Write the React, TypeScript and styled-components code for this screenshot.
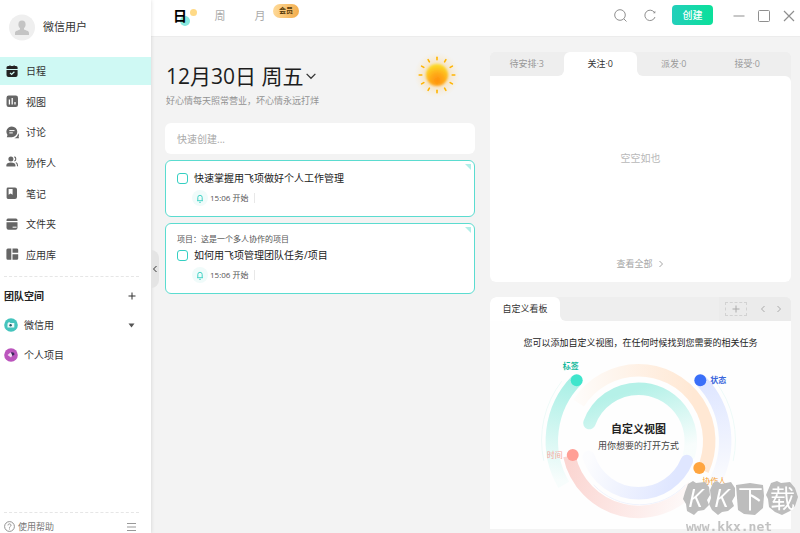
import React from "react";
import styled, { createGlobalStyle, css } from "styled-components";

const GlobalStyle = createGlobalStyle`
  *, *::before, *::after { box-sizing: border-box; }
  html, body { margin: 0; padding: 0; }
  body {
    font-family: "Open Sans", "Noto Sans CJK SC", sans-serif;
    font-size: 10px;
    line-height: 16px;
    color: #333;
    background: #f3f3f3;
  }
  button, input { font: inherit; color: inherit; }
  button { border: 0; padding: 0; background: none; cursor: pointer; }
  a { color: inherit; text-decoration: none; }
  h1, h2, p, ul { margin: 0; padding: 0; }
  ul { list-style: none; }
  svg { display: block; flex: none; }
`;

const Shell = styled.div`
  display: flex;
  min-height: 100vh;
`;

/* ---------- sidebar ---------- */

const Sidebar = styled.aside`
  position: relative;
  z-index: 1;
  flex: 0 0 151px;
  display: flex;
  flex-direction: column;
  background: #fff;
  box-shadow: 0 0 4px rgba(0, 0, 0, 0.14);
`;

const Profile = styled.div`
  display: flex;
  align-items: center;
  gap: 8px;
  height: 57px;
  padding: 0 9px 3px;
  font-size: 11px;
`;

const NavList = styled.ul`
  display: flex;
  flex-direction: column;
  justify-content: space-between;
  height: 212px;
`;

const NavLink = styled.a<{ $active?: boolean }>`
  display: flex;
  align-items: center;
  gap: 7px;
  height: 28px;
  padding: 0 6px;
  color: #333;
  background: ${(p) => (p.$active ? "#cff9f4" : "transparent")};
  svg { color: ${(p) => (p.$active ? "#222" : "#666")}; }
`;

const Divider = styled.hr`
  width: auto;
  margin: 7px 12px 0 4px;
  border: 0;
  border-top: 1px dashed #e6e6e6;
`;

const TeamHeading = styled.div`
  display: flex;
  align-items: center;
  justify-content: space-between;
  height: 38px;
  padding: 0 15px 0 4px;
  h2 { font-size: 10px; font-weight: 700; color: #222; }
`;

const TeamRow = styled.button`
  display: flex;
  align-items: center;
  gap: 6px;
  width: 100%;
  height: 30px;
  padding: 0 16px 0 4px;
  text-align: left;
  span { flex: 1; }
`;

const TeamRows = styled.div`
  margin-top: -5px;
`;

const SideFooter = styled.footer`
  margin-top: auto;
`;

const FooterBar = styled.div`
  display: flex;
  align-items: center;
  justify-content: space-between;
  height: 20px;
  padding: 7px 15px 0 4px;
  font-size: 9px;
  color: #777;
  a { display: flex; align-items: center; gap: 3px; }
`;

const CollapseHandle = styled.button`
  position: absolute;
  left: 100%;
  top: 250px;
  width: 8px;
  height: 38px;
  display: flex;
  align-items: center;
  justify-content: center;
  border-radius: 0 8px 8px 0;
  background: #e4e4e4;
`;

/* ---------- top bar ---------- */

const Main = styled.main`
  flex: 1;
  min-width: 0;
  display: flex;
  flex-direction: column;
`;

const TopBar = styled.header`
  display: flex;
  justify-content: space-between;
  height: 37px;
  padding: 0 5px 5px 14px;
  background: #fff;
  border-bottom: 1px solid #ececec;
`;

const ViewTabs = styled.nav`
  display: flex;
  align-items: center;
`;

const ViewTab = styled.button<{ $active?: boolean }>`
  position: relative;
  z-index: 0;
  width: 40px;
  height: 30px;
  padding-right: 10px;
  font-size: ${(p) => (p.$active ? "14px" : "11px")};
  font-weight: ${(p) => (p.$active ? 700 : 400)};
  color: ${(p) => (p.$active ? "#000" : "#aaa")};
  ${(p) =>
    p.$active &&
    css`
      &::before, &::after {
        content: "";
        position: absolute;
        z-index: -1;
        border-radius: 50%;
      }
      &::before { left: 15px; top: 15px; width: 10px; height: 10px; background: #86e8de; }
      &::after { left: 25px; top: 8px; width: 7px; height: 7px; background: #ffda87; }
    `}
`;

const MemberBadge = styled.span`
  position: absolute;
  left: 28px;
  top: 3px;
  width: 26px;
  height: 14px;
  border-radius: 7px;
  background: linear-gradient(100deg, #ffdc9c, #f2ab49);
  color: #563908;
  font-size: 7px;
  font-weight: 700;
  line-height: 14px;
  text-align: center;
`;

const Tools = styled.div`
  display: flex;
  align-items: center;
  color: #8f8f8f;
`;

const IconButton = styled.button<{ $gap: number }>`
  margin-right: ${(p) => p.$gap}px;
`;

const CreateButton = styled.button`
  width: 41px;
  height: 20px;
  margin: 0 20px 1px 0;
  border-radius: 4px;
  background: linear-gradient(90deg, #23cfbb, #0be09a);
  color: #fff;
  font-weight: 500;
  line-height: 20px;
`;

/* ---------- content ---------- */

const Content = styled.div`
  flex: 1;
  display: grid;
  grid-template-columns: minmax(0, 310fr) minmax(0, 301fr);
  gap: 15px;
  padding: 15px 9px 4px 14px;
`;

const Column = styled.section`
  display: flex;
  flex-direction: column;
`;

const DayHeader = styled.div`
  display: flex;
  justify-content: space-between;
  height: 71px;
  padding: 0 14px 0 1px;
`;

const DateButton = styled.button`
  display: flex;
  align-items: center;
  gap: 3px;
  height: 28px;
  margin-top: 10px;
  h1 { font-size: 21px; font-weight: 400; line-height: 28px; color: #1d1d1d; }
`;

const Motto = styled.p`
  margin-top: 4px;
  font-size: 9px;
  line-height: 14px;
  color: #929292;
`;

const TaskStack = styled.div`
  display: flex;
  flex-direction: column;
  gap: 6px;
`;

const QuickInput = styled.input`
  width: 100%;
  height: 31px;
  padding: 0 12px;
  border: 0;
  border-radius: 6px;
  background: #fff;
  outline: none;
  &::placeholder { color: #aaa; opacity: 1; }
`;

const TaskCard = styled.article`
  position: relative;
  padding: 9px 11px 10px;
  border: 1px solid #5bdcd0;
  border-radius: 6px;
  background: #fff;
  &::after {
    content: "";
    position: absolute;
    top: 3px;
    right: 3px;
    border-top: 6px solid #b1efe9;
    border-left: 6px solid transparent;
  }
`;

const ProjectName = styled.p`
  margin-bottom: 2px;
  font-size: 8px;
  line-height: 12px;
  color: #555;
`;

const TaskTitle = styled.label`
  display: flex;
  align-items: center;
  gap: 6px;
  color: #222;
`;

const Checkbox = styled.input`
  appearance: none;
  width: 11px;
  height: 11px;
  margin: 0;
  border: 1px solid #35cfc2;
  border-radius: 3px;
  background: #fff;
  &:checked { background: #4fd6cb; }
`;

const TaskTime = styled.div`
  display: flex;
  align-items: center;
  gap: 2px;
  margin: 4px 0 0 15px;
  font-size: 8px;
  color: #555;
  time { padding-right: 6px; line-height: 10px; border-right: 1px solid #e8e8e8; }
`;

const BellDot = styled.span`
  display: grid;
  place-items: center;
  width: 16px;
  height: 16px;
  border-radius: 50%;
  background: #f0fbfa;
`;

/* ---------- panels ---------- */

const Panel = styled.section<{ $grow?: boolean }>`
  flex: ${(p) => (p.$grow ? "1" : "none")};
  display: flex;
  flex-direction: column;
  border-radius: 6px;
  background: #eee;
  & + & { margin-top: 15px; }
`;

const TabStrip = styled.div<{ $tail?: boolean }>`
  display: flex;
  height: 24px;
  overflow: hidden;
  border-radius: 6px 6px 0 0;
  background: linear-gradient(#eee 50%, #fff 50%);
  &::after {
    content: "";
    width: ${(p) => (p.$tail ? "7px" : "0")};
    background: #eee;
  }
`;

const PanelTab = styled.button<{ $active?: boolean; $side?: "left" | "right" }>`
  flex: 1;
  font-size: 9px;
  color: ${(p) => (p.$active ? "#333" : "#999")};
  background: ${(p) => (p.$active ? "#fff" : "#eee")};
  border-radius: ${(p) =>
    p.$active ? "6px 6px 0 0" : p.$side === "left" ? "0 0 6px 0" : p.$side === "right" ? "0 0 0 6px" : "0"};
`;

const BoardTab = styled(PanelTab)`
  flex: 0 0 70px;
`;

const StripRest = styled.div`
  flex: 1;
  display: flex;
  justify-content: flex-end;
  background: #eee;
  border-radius: 0 0 0 6px;
`;

const BoardTools = styled.div`
  display: flex;
  align-items: center;
  gap: 8px;
  width: 72px;
  padding: 0 6px;
  background: #ebebeb;
  color: #aaa;
`;

const AddBoard = styled.button`
  display: grid;
  place-items: center;
  width: 22px;
  height: 14px;
  margin-right: 4px;
  border: 1px dashed #d2d2d2;
`;

const EmptyBody = styled.div`
  flex: 1;
  display: flex;
  flex-direction: column;
  align-items: center;
  justify-content: space-between;
  padding: 74px 0 10px;
  border-radius: 0 6px 6px 6px;
  background: #fff;
  color: #b8b8b8;
`;

const MoreLink = styled.a`
  display: flex;
  align-items: center;
  gap: 4px;
  font-size: 9px;
  color: #a5a5a5;
`;

const BoardBody = styled.div`
  padding-top: 14px;
  background: #fefefe;
  p { margin-bottom: 4px; font-size: 9px; text-align: center; color: #222; }
`;

const Rings = styled.svg`
  width: 100%;
  height: 174px;
`;

const Watermark = styled.svg`
  position: fixed;
  z-index: 2;
  right: 0;
  bottom: 0;
  pointer-events: none;
`;

/* ---------- drawings ---------- */

const navIcons: Record<string, React.ReactNode> = {
  calendar: (
    <>
      <path fill="currentColor" d="M2.2 1h1V.4h1.5V1h2.7V.4h1.5V1h1A1.6 1.6 0 0 1 11.600 2.600V4H.5V2.600A1.600 1.600 0 0 1 2.200 1Z" />
      <path fill="currentColor" d="M.5 5h11.100v5a2 2 0 0 1-2 2H2.500a2 2 0 0 1-2-2Z" />
      <path d="m4 7.800 1.600 1.600L8.400 6.700" stroke="#cff9f4" strokeWidth="1.200" fill="none" />
    </>
  ),
  chart: (
    <>
      <rect x=".5" y=".5" width="11.500" height="11.500" rx="2.200" fill="currentColor" />
      <path d="M3.400 4.500V9.500M6.200 3V9.500M9 7V9.500" stroke="#fff" strokeWidth="1.300" />
    </>
  ),
  chat: (
    <>
      <path fill="currentColor" d="M5.900.4a5.400 5.400 0 1 1 0 10.800H.8l.7-2.200A5.400 5.400 0 0 1 5.900.4Z" />
      <path d="M3.300 4.600h5.200M3.300 6.900h3.500" stroke="#fff" strokeWidth="1" />
      <path fill="currentColor" d="M12.200 7.200c1 1.500.9 2.600.4 3.400l.4 1.700H8.300c2-.8 3.500-2.400 3.900-5.100Z" />
    </>
  ),
  people: (
    <>
      <circle cx="4.900" cy="3" r="2.500" fill="currentColor" />
      <path fill="currentColor" d="M.4 10.600V9.300C.4 7.400 2 6.500 4.900 6.500s4.500.9 4.500 2.800v1.300Z" />
      <path d="M8.300.9c2 .3 2 3.700 0 4.100M9.800 6.600c1.300.5 1.800 1.600 1.800 3.600" stroke="currentColor" strokeWidth="1.100" fill="none" />
    </>
  ),
  note: (
    <>
      <path fill="currentColor" d="M2 .5h7a2 2 0 0 1 2 2v7.500a2 2 0 0 1-2 2H2A1.400 1.400 0 0 1 .6 10.600V1.900A1.400 1.400 0 0 1 2 .5Z" />
      <path fill="#fff" d="M2.600 2h4v5.800l-2-1.400-2 1.400Z" />
    </>
  ),
  folder: (
    <>
      <path fill="currentColor" d="M2.300.5h7.700A1.600 1.600 0 0 1 11.500 2v1H.5V2A1.600 1.600 0 0 1 2.300.5ZM.5 4.300h11v5.500a2 2 0 0 1-2 2h-7a2 2 0 0 1-2-2Z" />
      <path d="M6.600 9.200h4" stroke="#fff" strokeWidth="1" />
    </>
  ),
  apps: (
    <path fill="currentColor" d="M2 .4h3.300v11.400H2A1.500 1.500 0 0 1 .4 10.300V1.900A1.500 1.500 0 0 1 2 .4ZM6.500.4h4.300A1.400 1.400 0 0 1 12.200 1.800v3H6.500ZM6.500 6.200h5.700v4.200a1.400 1.400 0 0 1-1.400 1.400H6.500Z" />
  ),
};

const Chevron = ({ dir, size = 8 }: { dir: "left" | "right" | "down"; size?: number }) => {
  const d = { left: "M5.500 1 2.500 4l3 3", right: "m2.500 1 3 3-3 3", down: "m.5 2.300 3.500 3.500 3.500-3.500" }[dir];
  return (
    <svg width={size} height={size} viewBox="0 0 8 8" fill="none" stroke="currentColor" aria-hidden>
      <path d={d} />
    </svg>
  );
};

const Plus = () => (
  <svg width="8" height="8" viewBox="0 0 8 8" stroke="currentColor" aria-hidden>
    <path d="M4 .5v7M.5 4h7" />
  </svg>
);

const Bell = () => (
  <svg width="8" height="9" viewBox="0 0 8 9" fill="none" stroke="#43d3c6" aria-hidden>
    <path d="M1 6.700h6M1.800 6.500V3.500a2.200 2.200 0 0 1 4.400 0v3M3.200 8.300h1.600" />
  </svg>
);

const Sun = () => (
  <svg width="48" height="46" viewBox="-24 -23 48 46" aria-hidden>
    <defs>
      <radialGradient id="sunGlow">
        <stop offset=".3" stopColor="#ffc060" stopOpacity=".5" />
        <stop offset="1" stopColor="#ffe0a0" stopOpacity="0" />
      </radialGradient>
      <radialGradient id="sunCore" cx=".52" cy=".75" r=".75">
        <stop offset="0" stopColor="#ff8f0c" />
        <stop offset=".5" stopColor="#ffb01a" />
        <stop offset="1" stopColor="#fbe22c" />
      </radialGradient>
      <filter id="sunSoft" x="-30%" y="-30%" width="160%" height="160%">
        <feGaussianBlur stdDeviation="1" />
      </filter>
    </defs>
    <circle r="23" fill="url(#sunGlow)" />
    <circle r="11" fill="url(#sunCore)" filter="url(#sunSoft)" />
    <g stroke="#ffb400" strokeWidth="1.600" strokeLinecap="round">
      {Array.from({ length: 12 }, (_, i) => (
        <path key={i} d="M0-17.800v2.600" transform={`rotate(${i * 30})`} />
      ))}
    </g>
  </svg>
);

const gradients: [string, string, [number, number, number, number]][] = [
  ["outerTeal", "#a8efe5", [85, 25, 68, 125]],
  ["outerBlue", "#dde5ff", [211, 25, 228, 130]],
  ["peach", "#ffe8d4", [205, 50, 85, 60]],
  ["pink", "#fbd5d1", [80, 100, 205, 140]],
  ["innerTeal", "#b5f1e8", [149, 33, 170, 100]],
  ["innerBlue", "#dfe6ff", [185, 125, 100, 100]],
];

const rings: [string, string][] = [
  ["outerTeal", "M87 25A87 87 0 0 0 74 130"],
  ["outerBlue", "M211 25A87 87 0 0 1 224 130"],
  ["peach", "M89 48A71 71 0 0 1 149 15A71 71 0 0 1 213.600 115.400"],
  ["pink", "M79.600 101A71 71 0 0 0 204 131"],
  ["innerTeal", "M99.700 68A52.500 52.500 0 0 1 149 33.500A52.500 52.500 0 0 1 199.700 99.600"],
  ["innerBlue", "M197.500 106A52.500 52.500 0 0 1 149 138.500A52.500 52.500 0 0 1 99 102"],
];

const RingChart = () => (
  <Rings viewBox="0 0 302 174" role="img" aria-label="自定义视图">
    <defs>
      {gradients.map(([id, color, [x1, y1, x2, y2]]) => (
        <linearGradient key={id} id={id} gradientUnits="userSpaceOnUse" x1={x1} y1={y1} x2={x2} y2={y2}>
          <stop offset="0" stopColor={color} />
          <stop offset="1" stopColor={color} stopOpacity=".08" />
        </linearGradient>
      ))}
    </defs>
    <g fill="none" strokeWidth="12.500">
      {rings.map(([id, d]) => (
        <path key={id} d={d} stroke={`url(#${id})`} strokeLinecap={id.startsWith("inner") ? "round" : "butt"} />
      ))}
      <path d="M72 26A97 97 0 0 0 54 106M226 26A97 97 0 0 1 244 106" stroke="#eefaf8" strokeWidth="1" />
      <path d="M104 130A63 63 0 0 0 196 130" stroke="#f0f3fd" strokeWidth="1" />
    </g>
    <circle cx="87" cy="25" r="6" fill="#3fe5cc" />
    <circle cx="211" cy="25" r="6" fill="#3a6ff8" />
    <circle cx="83" cy="100" r="6" fill="#ff9f96" />
    <circle cx="210" cy="113" r="6" fill="#ffa53f" />
    <g fontSize="8">
      <text x="73" y="14" fill="#12b89c" fontWeight="700">标签</text>
      <text x="221" y="28" fill="#3a66dc" fontWeight="700">状态</text>
      <text x="57" y="103" fill="#f7a39a">时间</text>
      <text x="213" y="129" fill="#f5a030">协作人</text>
    </g>
    <text x="149" y="78" textAnchor="middle" fontSize="11" fontWeight="700" fill="#222">自定义视图</text>
    <text x="149" y="94" textAnchor="middle" fontSize="9" fill="#444">用你想要的打开方式</text>
  </Rings>
);

const SiteMark = () => (
  <Watermark width="120" height="56" viewBox="0 0 120 56" aria-hidden>
    <g fill="#bdbdbd">
      <path d="m8 7 5-3 3 2 9-1 4 5 1 8-3 5 2 5-5 5-6 1-4 4-7-4-1-7-3-5 2-7Z" />
      <path d="m33 6 4-2 4 3 10-2 4 6v8l-3 5 2 5-6 5-6 1-4 3-6-5-3-6 2-6-1-8Z" />
      <path d="m56 8 14-2 13 2 1 11-1 12-8 7-11-1-6-4-1-12Z" />
      <path d="m91 6 6-2 4 2 9-1 5 6 3 9-3 9-5 5-8 4-7-3-6-5-1-8-2-4Z" />
    </g>
    <g fill="#fff" fontSize="26" fontStyle="italic">
      <text x="8" y="30">K</text>
      <text x="34" y="30">K</text>
    </g>
    <g fill="#fff" fontSize="25">
      <text x="58" y="31">下</text>
      <text x="90" y="31">载</text>
    </g>
    <text x="6" y="54" fill="#c2c2c2" fontFamily="DejaVu Sans Mono, monospace" fontWeight="700" fontSize="13">www.kkx.net</text>
  </Watermark>
);

/* ---------- page ---------- */

const navItems = [
  ["calendar", "日程"],
  ["chart", "视图"],
  ["chat", "讨论"],
  ["people", "协作人"],
  ["note", "笔记"],
  ["folder", "文件夹"],
  ["apps", "应用库"],
];

const tasks = [
  { id: "t1", title: "快速掌握用飞项做好个人工作管理" },
  { id: "t2", title: "如何用飞项管理团队任务/项目", project: "项目：这是一个多人协作的项目" },
];

const panelTabs: { label: string; active?: boolean; side?: "left" | "right" }[] = [
  { label: "待安排·3", side: "left" },
  { label: "关注·0", active: true },
  { label: "派发·0", side: "right" },
  { label: "接受·0" },
];

export default function App() {
  return (
    <>
      <GlobalStyle />
      <Shell lang="zh-CN">
        <Sidebar>
          <Profile>
            <svg width="26" height="27" viewBox="0 0 26 27" aria-hidden>
              <circle cx="13" cy="13.500" r="13" fill="#efefef" />
              <path fill="#c4c4c4" d="M13 6.500a3.600 4 0 0 1 3.600 4c0 1.900-.7 2.900-1.600 3.800v1.200c1.500 1 5 1 5 3.500v2H6v-2c0-2.500 3.500-2.500 5-3.500v-1.200c-.9-.9-1.600-1.900-1.600-3.800a3.600 4 0 0 1 3.600-4Z" />
            </svg>
            微信用户
          </Profile>
          <nav>
            <NavList>
              {navItems.map(([icon, label], i) => (
                <li key={icon}>
                  <NavLink href="#" $active={i === 0}>
                    <svg width="13" height="13" viewBox="0 0 13 13" aria-hidden>{navIcons[icon]}</svg>
                    {label}
                  </NavLink>
                </li>
              ))}
            </NavList>
          </nav>
          <Divider />
          <TeamHeading>
            <h2>团队空间</h2>
            <button aria-label="添加团队"><Plus /></button>
          </TeamHeading>
          <TeamRows>
            <TeamRow>
              <svg width="14" height="14" viewBox="0 0 14 14" aria-hidden>
                <circle cx="7" cy="7" r="6.800" fill="#45c4bd" />
                <path d="M3.500 5.500 5 4l1.500 1h3.800v4.500h-6.800Z" fill="#fff" opacity=".9" />
                <circle cx="6.600" cy="7.300" r="1.200" fill="#245c68" />
              </svg>
              <span>微信用</span>
              <svg width="7" height="5" viewBox="0 0 7 5" aria-hidden><path d="M.5.5h6l-3 4Z" fill="#555" /></svg>
            </TeamRow>
            <TeamRow>
              <svg width="14" height="14" viewBox="0 0 14 14" aria-hidden>
                <circle cx="7" cy="7" r="6.800" fill="#bb55bd" />
                <path d="m3.500 7 3-2.500L9 6.500l-2 3Z" fill="#f3d8f3" />
                <path d="M7 4.500c2-.5 3.500.5 3.500 2L8.500 8Z" fill="#3c2a5c" />
              </svg>
              <span>个人项目</span>
            </TeamRow>
          </TeamRows>
          <SideFooter>
            <Divider />
            <FooterBar>
              <a href="#">
                <svg width="11" height="11" viewBox="0 0 11 11" fill="none" stroke="#888" strokeWidth=".9" aria-hidden>
                  <circle cx="5.500" cy="5.500" r="4.900" />
                  <path d="M4 4.400c0-2 3-2 3 0 0 1.100-1.500 1-1.500 2.300M5.500 7.500v1" />
                </svg>
                使用帮助
              </a>
              <button aria-label="菜单">
                <svg width="9" height="8" viewBox="0 0 9 8" stroke="#999" aria-hidden><path d="M0 .5h9M0 4h9M0 7.500h9" /></svg>
              </button>
            </FooterBar>
          </SideFooter>
          <CollapseHandle aria-label="收起侧栏"><Chevron dir="left" /></CollapseHandle>
        </Sidebar>

        <Main>
          <TopBar>
            <ViewTabs>
              <ViewTab $active>日</ViewTab>
              <ViewTab>周</ViewTab>
              <ViewTab>月<MemberBadge>会员</MemberBadge></ViewTab>
            </ViewTabs>
            <Tools>
              <IconButton $gap={17} aria-label="搜索">
                <svg width="13" height="13" viewBox="0 0 13 13" fill="none" stroke="currentColor" aria-hidden>
                  <circle cx="6" cy="6" r="5.300" /><path d="m9.800 9.800 2.700 2.700" />
                </svg>
              </IconButton>
              <IconButton $gap={16} aria-label="刷新">
                <svg width="12" height="13" viewBox="0 0 12 13" fill="none" stroke="currentColor" aria-hidden>
                  <path d="M11 8A5.200 5.200 0 1 1 10.200 3.200" />
                  <path d="M11.300 1.800v2.400H9Z" fill="currentColor" stroke="none" />
                </svg>
              </IconButton>
              <CreateButton>创建</CreateButton>
              <IconButton $gap={13} aria-label="最小化">
                <svg width="12" height="12" viewBox="0 0 12 12" stroke="currentColor" aria-hidden><path d="M.5 6h11" /></svg>
              </IconButton>
              <IconButton $gap={13} aria-label="最大化">
                <svg width="12" height="12" viewBox="0 0 12 12" fill="none" stroke="currentColor" aria-hidden><rect x=".5" y=".5" width="11" height="11" rx="1" /></svg>
              </IconButton>
              <IconButton $gap={0} aria-label="关闭">
                <svg width="12" height="12" viewBox="0 0 12 12" stroke="currentColor" strokeWidth="1.200" aria-hidden><path d="m1 1 10 10M11 1 1 11" /></svg>
              </IconButton>
            </Tools>
          </TopBar>

          <Content>
            <Column>
              <DayHeader>
                <div>
                  <DateButton>
                    <h1>12月30日 周五</h1>
                    <Chevron dir="down" size={10} />
                  </DateButton>
                  <Motto>好心情每天照常营业，坏心情永远打烊</Motto>
                </div>
                <Sun />
              </DayHeader>
              <TaskStack>
                <QuickInput aria-label="快速创建" placeholder="快速创建..." />
                {tasks.map((t) => (
                  <TaskCard key={t.id}>
                    {t.project && <ProjectName>{t.project}</ProjectName>}
                    <TaskTitle htmlFor={t.id}>
                      <Checkbox type="checkbox" id={t.id} />
                      {t.title}
                    </TaskTitle>
                    <TaskTime>
                      <BellDot><Bell /></BellDot>
                      <time>15:06 开始</time>
                    </TaskTime>
                  </TaskCard>
                ))}
              </TaskStack>
            </Column>

            <Column>
              <Panel $grow>
                <TabStrip $tail>
                  {panelTabs.map((t) => (
                    <PanelTab key={t.label} $active={t.active} $side={t.side}>{t.label}</PanelTab>
                  ))}
                </TabStrip>
                <EmptyBody>
                  <p>空空如也</p>
                  <MoreLink href="#">查看全部<Chevron dir="right" /></MoreLink>
                </EmptyBody>
              </Panel>
              <Panel>
                <TabStrip>
                  <BoardTab $active>自定义看板</BoardTab>
                  <StripRest>
                    <BoardTools>
                      <AddBoard aria-label="添加看板"><Plus /></AddBoard>
                      <button aria-label="上一个"><Chevron dir="left" /></button>
                      <button aria-label="下一个"><Chevron dir="right" /></button>
                    </BoardTools>
                  </StripRest>
                </TabStrip>
                <BoardBody>
                  <p>您可以添加自定义视图，在任何时候找到您需要的相关任务</p>
                  <RingChart />
                </BoardBody>
              </Panel>
            </Column>
          </Content>
        </Main>
      </Shell>
      <SiteMark />
    </>
  );
}
